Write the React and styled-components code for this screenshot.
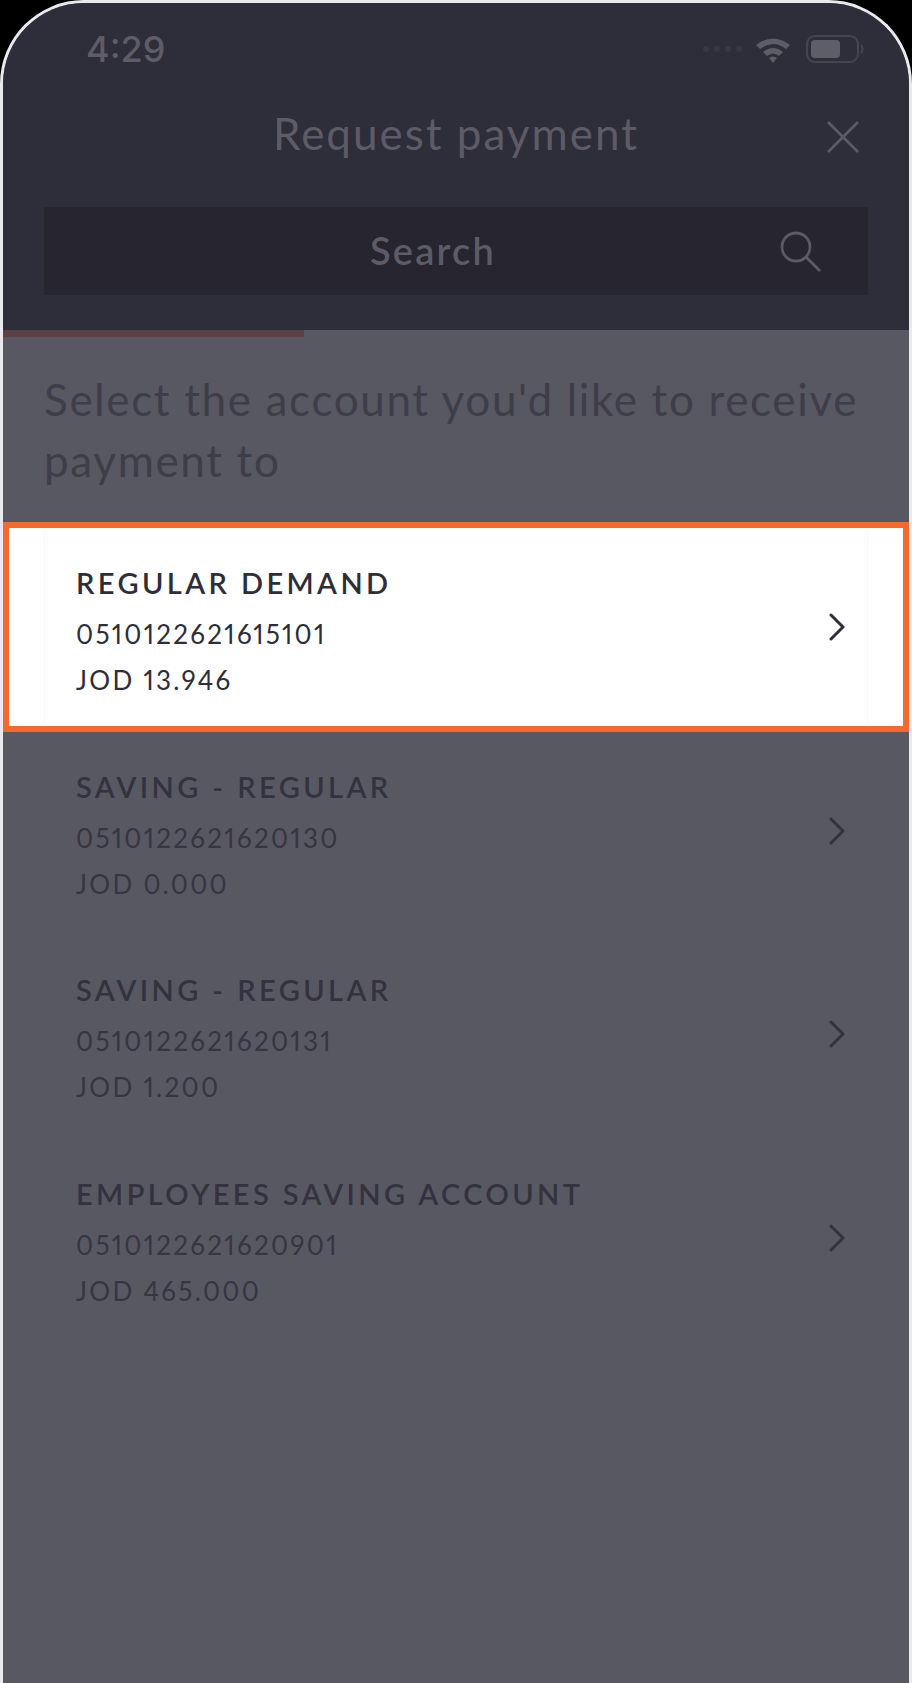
import React from "react";
import styled, { createGlobalStyle } from "styled-components";

const Global = createGlobalStyle`
  html, body { margin: 0; padding: 0; background: #000; }
  *, *::before, *::after { box-sizing: border-box; }
`;

const FONT = `"Lato", "Noto Sans", sans-serif`;

const Screen = styled.div`
  width: 912px;
  height: 1683px;
  border: 3px solid #e9e9ee;
  border-bottom: none;
  border-radius: 84px 84px 0 0;
  background: #585863;
  overflow: hidden;
  display: flex;
  flex-direction: column;
  font-family: ${FONT};
`;

const Header = styled.header`
  background: #2e2d3a;
  height: 327px;
  flex: none;
  display: flex;
  flex-direction: column;
`;

const StatusBar = styled.div`
  height: 78px;
  padding: 14px 45px 0 83px;
  display: flex;
  align-items: center;
  justify-content: space-between;
`;

const Time = styled.span`
  font-family: "Inter", sans-serif;
  font-size: 36px;
  font-weight: 500;
  color: #5d5c67;
`;

const StatusIcons = styled.div`
  display: flex;
  align-items: center;
  gap: 12px;
`;

const Battery = styled.svg`
  margin-left: 3px;
`;

const TitleRow = styled.div`
  height: 98px;
  padding-top: 6px;
  display: flex;
  align-items: center;
  justify-content: center;
  position: relative;
`;

const Title = styled.h1`
  margin: 0;
  font-size: 44px;
  font-weight: 400;
  letter-spacing: 2px;
  color: #5c5b66;
`;

const CloseIcon = styled.svg`
  position: absolute;
  right: 50px;
  top: 40px;
`;

const SearchBox = styled.div`
  margin: 28px 41px 0;
  height: 88px;
  background: #262530;
  display: flex;
  align-items: center;
  justify-content: space-between;
  padding: 0 46px 0 326px;
`;

const SearchText = styled.span`
  font-size: 38px;
  font-weight: 600;
  letter-spacing: 2.2px;
  color: #5c5b66;
  margin-top: -2px;
`;

const Progress = styled.div`
  height: 7px;
  flex: none;
`;

const ProgressFill = styled.div`
  height: 100%;
  width: 301px;
  background: #5c4144;
`;

const Heading = styled.p`
  margin: 0;
  padding: 32px 41px 0;
  height: 185px;
  flex: none;
  font-size: 44px;
  line-height: 61px;
  letter-spacing: 1.65px;
  color: #3e3d49;
`;

const List = styled.div`
  display: flex;
  flex-direction: column;
`;

const Row = styled.div`
  height: 203.5px;
  padding: 0 41px;
  position: relative;
  ${(p) =>
    p.$selected &&
    `
    &::before {
      content: "";
      position: absolute;
      left: 0;
      right: 0;
      top: 0;
      height: 210px;
      background: #fff;
      border: 6px solid #f26a30;
    }
  `}
`;

const RowInner = styled.div`
  position: relative;
  height: 100%;
  padding: 43px 22px 0 32px;
  display: flex;
  justify-content: space-between;
  align-items: flex-start;
  ${(p) => p.$selected && `border: 1px solid #f8f8f8; border-width: 0 1px; height: 198px; margin-top: 6px; padding-top: 37px; padding-left: 31px; padding-right: 21px;`}
`;

const Details = styled.div`
  display: flex;
  flex-direction: column;
`;

const AccountName = styled.div`
  font-size: 29px;
  line-height: 36px;
  font-weight: 600;
  letter-spacing: 3.4px;
  margin-bottom: 10px;
  color: ${(p) => (p.$selected ? "#2e2d38" : "#33323e")};
`;

const AccountLine = styled.div`
  font-size: 26px;
  line-height: 46px;
  letter-spacing: 2.3px;
  font-variant-numeric: proportional-nums;
  color: ${(p) => (p.$selected ? "#2e2d38" : "#363541")};
`;

const Chevron = styled.svg`
  margin-top: 48px;
  flex: none;
`;

const accounts = [
  { name: "REGULAR DEMAND", number: "0510122621615101", amount: "JOD 13.946", selected: true },
  { name: "SAVING - REGULAR", number: "0510122621620130", amount: "JOD 0.000" },
  { name: "SAVING - REGULAR", number: "0510122621620131", amount: "JOD 1.200" },
  { name: "EMPLOYEES SAVING ACCOUNT", number: "0510122621620901", amount: "JOD 465.000" },
];

export default function App() {
  return (
    <>
      <Global />
      <Screen>
        <Header>
          <StatusBar>
            <Time>4:29</Time>
            <StatusIcons>
              <svg width="42" height="8" viewBox="0 0 42 8">
                {[5, 16, 27, 38].map((x) => (
                  <circle key={x} cx={x} cy="4" r="3" fill="#393844" />
                ))}
              </svg>
              <svg width="36" height="27" viewBox="0 0 36 27">
                <path d="M1 9 Q18 -4 35 9 L31 13 Q18 3 5 13 Z" fill="#5d5c67" />
                <path d="M8 16 Q18 8 28 16 L24 20 Q18 15 12 20 Z" fill="#5d5c67" />
                <path d="M14 22 Q18 19 22 22 L18 27 Z" fill="#5d5c67" />
              </svg>
              <Battery width="58" height="28" viewBox="0 0 58 28">
                <rect x="1" y="1" width="51" height="26" rx="8" fill="none" stroke="#45444f" strokeWidth="2" />
                <rect x="5" y="5" width="29" height="18" rx="4" fill="#5e5d68" />
                <path d="M55 10 q3 4 0 8" fill="none" stroke="#45444f" strokeWidth="2" />
              </Battery>
            </StatusIcons>
          </StatusBar>
          <TitleRow>
            <Title>Request payment</Title>
            <CloseIcon width="32" height="32" viewBox="0 0 32 32">
              <path d="M1 1 L31 31 M31 1 L1 31" stroke="#5b5a65" strokeWidth="2.8" fill="none" />
            </CloseIcon>
          </TitleRow>
          <SearchBox>
            <SearchText>Search</SearchText>
            <svg width="42" height="42" viewBox="0 0 42 42">
              <circle cx="16" cy="17" r="14" fill="none" stroke="#5b5a65" strokeWidth="2.8" />
              <path d="M26 27 L40 41" stroke="#5b5a65" strokeWidth="2.8" fill="none" />
            </svg>
          </SearchBox>
        </Header>
        <Progress>
          <ProgressFill />
        </Progress>
        <Heading>Select the account you'd like to receive payment to</Heading>
        <List>
          {accounts.map((a) => (
            <Row key={a.number} $selected={a.selected}>
              <RowInner $selected={a.selected}>
                <Details>
                  <AccountName $selected={a.selected}>{a.name}</AccountName>
                  <AccountLine $selected={a.selected}>{a.number}</AccountLine>
                  <AccountLine $selected={a.selected}>{a.amount}</AccountLine>
                </Details>
                <Chevron width="18" height="28" viewBox="0 0 18 28">
                  <path d="M3 2 L15 14 L3 26" fill="none" stroke={a.selected ? "#2e2d38" : "#33323e"} strokeWidth="3" strokeLinecap="round" strokeLinejoin="round" />
                </Chevron>
              </RowInner>
            </Row>
          ))}
        </List>
      </Screen>
    </>
  );
}
